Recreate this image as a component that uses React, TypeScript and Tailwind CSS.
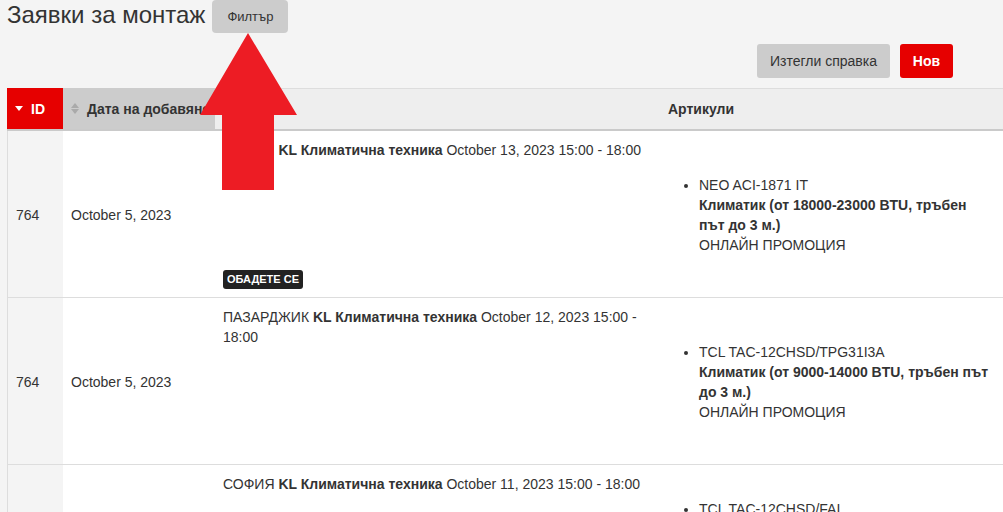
import { ReactNode } from "react";

type Row = {
  id: string;
  added: string;
  city: string;
  slot: string;
  badge?: string;
  product: string;
  kind: string;
  promo: string;
};

const rows: Row[] = [
  {
    id: "764",
    added: "October 5, 2023",
    city: "СОФИЯ",
    slot: "October 13, 2023 15:00 - 18:00",
    badge: "ОБАДЕТЕ СЕ",
    product: "NEO ACI-1871 IT",
    kind: "Климатик (от 18000-23000 BTU, тръбен\nпът до 3 м.)",
    promo: "ОНЛАЙН ПРОМОЦИЯ",
  },
  {
    id: "764",
    added: "October 5, 2023",
    city: "ПАЗАРДЖИК",
    slot: "October 12, 2023 15:00 - 18:00",
    product: "TCL TAC-12CHSD/TPG31I3A",
    kind: "Климатик (от 9000-14000 BTU, тръбен път до 3 м.)",
    promo: "ОНЛАЙН ПРОМОЦИЯ",
  },
  {
    id: "764",
    added: "October 5, 2023",
    city: "СОФИЯ",
    slot: "October 11, 2023 15:00 - 18:00",
    product: "TCL TAC-12CHSD/FAI",
    kind: "Климатик (от 9000-14000 BTU, тръбен път до 3 м.)",
    promo: "ОНЛАЙН ПРОМОЦИЯ\nМОНТАЖ В СРОК",
  },
];

function Caret({ up, className }: { up?: boolean; className: string }) {
  return (
    <svg width="8" height="5" viewBox="0 0 8 5" className={className}>
      {up ? <path d="M0 5 L4 0 L8 5 Z" fill="currentColor" /> : <path d="M0 0 L8 0 L4 5 Z" fill="currentColor" />}
    </svg>
  );
}

function Th({ children, className }: { children: ReactNode; className: string }) {
  return (
    <div className={`flex items-center gap-2 overflow-hidden whitespace-nowrap px-2 font-bold ${className}`}>
      {children}
    </div>
  );
}

export default function App() {
  return (
    <div
      className="relative h-[512px] w-[1003px] overflow-hidden bg-[#f4f4f4] text-[14px] leading-5 text-[#333]"
      style={{ fontFamily: '"Liberation Sans", Arial, sans-serif' }}
    >
      <div className="flex items-start gap-[7px] pl-[7px]">
        <h1 className="text-[24px] leading-[30px] text-[#333]">Заявки за монтаж</h1>
        <button className="h-[33px] w-[76px] rounded-[4px] bg-[#cccccc] text-[13px] text-[#333]">Филтър</button>
      </div>

      <div className="mt-[11px] flex justify-end gap-[10px] pr-[50px]">
        <button className="h-[34px] w-[133px] rounded-[3px] bg-[#cccccc] text-[14px] text-[#333]">Изтегли справка</button>
        <button className="h-[34px] w-[53px] rounded-[3px] bg-[#e60000] text-[14px] font-bold text-white">Нов</button>
      </div>

      <div className="ml-[7px] mt-[10px] w-[1100px]">
        <div className="grid h-[43px] grid-cols-[56px_152px_445px_340px] border-b-2 border-b-black/15 bg-[#eeeeee] shadow-[inset_0_1px_0_#dddddd]">
          <Th className="bg-[#e60000] text-white">
            <Caret className="text-white" />
            ID
          </Th>
          <Th className="bg-[#cccccc]">
            <span className="flex shrink-0 flex-col gap-[1px] text-[#aaaaaa]">
              <Caret up className="" />
              <Caret className="" />
            </span>
            Дата на добавяне
          </Th>
          <Th className="">&nbsp;</Th>
          <Th className="">Артикули</Th>
        </div>

        <div className="border-l border-[#dddddd]">
          {rows.map((r, i) => (
            <div key={i} className="grid h-[167px] grid-cols-[55px_152px_445px_340px] border-b border-[#dddddd] bg-white">
              <div className="flex items-center bg-[#f4f4f4] px-2 pt-[1px]">{r.id}</div>
              <div className="flex items-center px-2 pt-[1px]">{r.added}</div>
              <div className="flex flex-col items-start justify-between px-2 pb-2 pt-[9px]">
                <p className="pr-[6px]">
                  {r.city} <b>KL Климатична техника</b> {r.slot}
                </p>
                {r.badge && (
                  <span className="rounded-[3px] bg-[#222222] px-[4px] text-[11px] font-bold leading-[19px] text-white">
                    {r.badge}
                  </span>
                )}
              </div>
              <div className="flex items-center px-2 pt-[1px]">
                <ul className="w-[332px] shrink-0 list-disc whitespace-pre-line pl-[31px] pr-[8px] marker:text-[#333]">
                  <li>
                    {r.product}
                    <br />
                    <b>{r.kind}</b>
                    <br />
                    {r.promo}
                  </li>
                </ul>
              </div>
            </div>
          ))}
        </div>
      </div>

      <svg className="absolute left-[200px] top-[33px]" width="98" height="158" viewBox="0 0 98 158">
        <path d="M48 0 L97 82 L74 82 L74 157 L22 157 L22 82 L0 82 Z" fill="#ed1c24" />
      </svg>
    </div>
  );
}
